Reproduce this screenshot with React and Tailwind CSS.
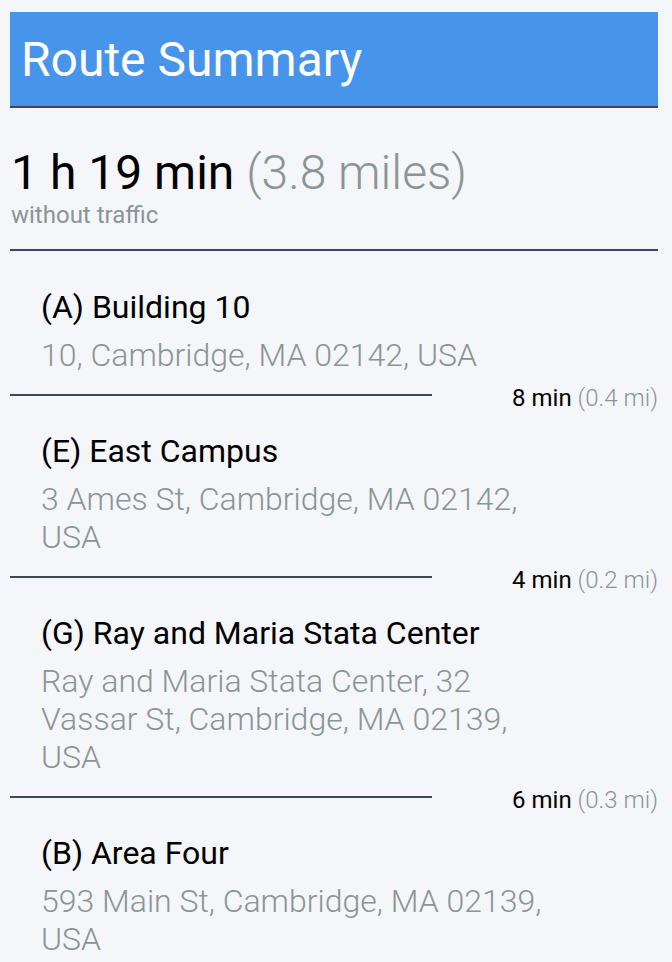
import React from "react";

const stops = [
  { label: "(A) Building 10", address: "10, Cambridge, MA 02142, USA" },
  { label: "(E) East Campus", address: "3 Ames St, Cambridge, MA 02142, USA" },
  {
    label: "(G) Ray and Maria Stata Center",
    address: "Ray and Maria Stata Center, 32 Vassar St, Cambridge, MA 02139, USA",
  },
  { label: "(B) Area Four", address: "593 Main St, Cambridge, MA 02139, USA" },
];

const legs = [
  { time: "8 min", dist: "(0.4 mi)" },
  { time: "4 min", dist: "(0.2 mi)" },
  { time: "6 min", dist: "(0.3 mi)" },
];

const App = () => {
  return (
    <div
      className="min-h-screen bg-[#f5f6fa] pt-3 pl-[10px] pr-[14px] pb-6"
      style={{ fontFamily: "Roboto, 'Noto Sans', sans-serif" }}
    >
      {/* header */}
      <div className="h-[96px] bg-[#4795eb] border-b-2 border-[#3c4858] pl-[11px] flex items-center">
        <h1 className="text-white text-[48px] leading-none font-normal pt-[2px]">
          Route Summary
        </h1>
      </div>

      {/* totals */}
      <div className="mt-[41px] pl-[1px]">
        <div className="text-[48px] leading-[48px] text-black">
          1 h 19 min <span className="text-[#8a9595] font-light">(3.8 miles)</span>
        </div>
        <div className="mt-[6px] text-[24px] leading-[24px] text-[#8a9595]">
          without traffic
        </div>
      </div>

      <div className="mt-[22px] h-[2px] bg-[#3c4858]"></div>

      {/* stops */}
      <div className="pt-[37px]">
        {stops.map((stop, i) => (
          <div key={stop.label}>
            <div className="pl-[31px]">
              <div className="text-[32px] leading-[38px] text-black">{stop.label}</div>
              <div className="mt-[10px] w-[515px] text-[32px] leading-[38px] font-light text-[#8a9595]">
                {stop.address}
              </div>
            </div>
            {legs[i] && (
              <div className="mt-[12px] mb-[22px] flex items-start">
                <div className="mt-[8px] w-[422px] h-[2px] bg-[#3c4858]"></div>
                <div className="ml-auto text-[24px] leading-[24px] text-black">
                  {legs[i].time}{" "}
                  <span className="text-[#8a9595] font-light">{legs[i].dist}</span>
                </div>
              </div>
            )}
          </div>
        ))}
      </div>
    </div>
  );
};

export default App;
